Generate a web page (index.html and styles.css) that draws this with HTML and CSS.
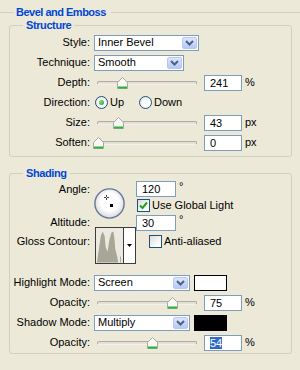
FILE: index.html
```html
<!DOCTYPE html>
<html>
<head>
<meta charset="utf-8">
<link rel="stylesheet" href="styles.css">
</head>
<body>
<div class="panel">
  <div class="title-row"><span class="rule short"></span><span class="title">Bevel and Emboss</span><span class="rule"></span></div>

  <fieldset class="group structure">
    <legend>Structure</legend>
    <div class="rows">
      <div class="row">
        <span class="lbl">Style:</span>
        <div class="select w-style"><span class="val">Inner Bevel</span><span class="drop"><svg width="9" height="6" viewBox="0 0 9 6"><path d="M1 1 L4.5 4.5 L8 1" fill="none" stroke="#4D6185" stroke-width="2"/></svg></span></div>
      </div>
      <div class="row">
        <span class="lbl">Technique:</span>
        <div class="select w-tech"><span class="val">Smooth</span><span class="drop"><svg width="9" height="6" viewBox="0 0 9 6"><path d="M1 1 L4.5 4.5 L8 1" fill="none" stroke="#4D6185" stroke-width="2"/></svg></span></div>
      </div>
      <div class="row">
        <span class="lbl">Depth:</span>
        <div class="slider"><span class="track"></span><span class="thumb" style="left:25px"><svg width="11" height="12" viewBox="0 0 11 12"><path d="M0.5 5.5 L5.5 0.5 L10.5 5.5 V11.5 H0.5 Z" fill="#F8F8F5" stroke="#A9A89F"/><path d="M1 10.5 H10" stroke="#2DB33A" stroke-width="2"/></svg></span></div>
        <span class="num">241</span><span class="unit">%</span>
      </div>
      <div class="row">
        <span class="lbl">Direction:</span>
        <span class="opt"><span class="radio on"></span><span class="optl">Up</span></span>
        <span class="opt"><span class="radio"></span><span class="optl">Down</span></span>
      </div>
      <div class="row">
        <span class="lbl">Size:</span>
        <div class="slider"><span class="track"></span><span class="thumb" style="left:21px"><svg width="11" height="12" viewBox="0 0 11 12"><path d="M0.5 5.5 L5.5 0.5 L10.5 5.5 V11.5 H0.5 Z" fill="#F8F8F5" stroke="#A9A89F"/><path d="M1 10.5 H10" stroke="#2DB33A" stroke-width="2"/></svg></span></div>
        <span class="num">43</span><span class="unit">px</span>
      </div>
      <div class="row">
        <span class="lbl">Soften:</span>
        <div class="slider"><span class="track"></span><span class="thumb" style="left:1px"><svg width="11" height="12" viewBox="0 0 11 12"><path d="M0.5 5.5 L5.5 0.5 L10.5 5.5 V11.5 H0.5 Z" fill="#F8F8F5" stroke="#A9A89F"/><path d="M1 10.5 H10" stroke="#2DB33A" stroke-width="2"/></svg></span></div>
        <span class="num">0</span><span class="unit">px</span>
      </div>
    </div>
  </fieldset>

  <fieldset class="group shading">
    <legend>Shading</legend>
    <div class="angle-grid">
      <span class="lbl g-angle">Angle:</span>
      <div class="dial"><svg width="31" height="31" viewBox="0 0 31 31">
        <defs><radialGradient id="dg" cx="50%" cy="45%" r="55%"><stop offset="0.55" stop-color="#FFFFFF"/><stop offset="1" stop-color="#D8D8DC"/></radialGradient></defs>
        <circle cx="15.5" cy="15.5" r="14.6" fill="url(#dg)" stroke="#68769A" stroke-width="1.4"/>
        <rect x="16" y="16" width="3" height="3" fill="#000"/>
        <g fill="#444"><rect x="12" y="7" width="1" height="1"/><rect x="12" y="8" width="1" height="1"/><rect x="12" y="10" width="1" height="1"/><rect x="12" y="11" width="1" height="1"/><rect x="10" y="9" width="1" height="1"/><rect x="11" y="9" width="1" height="1"/><rect x="13" y="9" width="1" height="1"/><rect x="14" y="9" width="1" height="1"/></g>
      </svg></div>
      <div class="g-angle-in"><span class="num wide">120</span><span class="deg">°</span></div>
      <div class="g-global"><span class="check on"><svg width="11" height="11" viewBox="0 0 11 11"><path d="M2 5.5 L4.5 8 L9 2.5" fill="none" stroke="#21A121" stroke-width="2"/></svg></span><span class="optl">Use Global Light</span></div>
      <span class="lbl g-alt">Altitude:</span>
      <div class="g-alt-in"><span class="num wide">30</span><span class="deg">°</span></div>
      <span class="lbl g-gloss">Gloss Contour:</span>
      <div class="contour">
        <div class="graph"><svg width="28" height="35" viewBox="0 0 28 35"><path d="M1 35 L3 21 L5 7 L7 3 L9 8 L10 19 L12 24 L14 11 L16 4 L18 3 L19 9 L20 21 L22 29 L23 35 Z M25 35 L25 29 L26 29 L26 35 Z" fill="#A8A697"/></svg></div>
        <div class="carrow"><svg width="5" height="3" viewBox="0 0 5 3"><path d="M0 0 H5 L2.5 3 Z" fill="#000"/></svg></div>
      </div>
      <div class="g-anti"><span class="check"></span><span class="optl">Anti-aliased</span></div>
    </div>
    <div class="rows modes">
      <div class="row">
        <span class="lbl">Highlight Mode:</span>
        <div class="select w-mode"><span class="val">Screen</span><span class="drop"><svg width="9" height="6" viewBox="0 0 9 6"><path d="M1 1 L4.5 4.5 L8 1" fill="none" stroke="#4D6185" stroke-width="2"/></svg></span></div>
        <span class="swatch white"></span>
      </div>
      <div class="row">
        <span class="lbl">Opacity:</span>
        <div class="slider"><span class="track"></span><span class="thumb" style="left:75px"><svg width="11" height="12" viewBox="0 0 11 12"><path d="M0.5 5.5 L5.5 0.5 L10.5 5.5 V11.5 H0.5 Z" fill="#F8F8F5" stroke="#A9A89F"/><path d="M1 10.5 H10" stroke="#2DB33A" stroke-width="2"/></svg></span></div>
        <span class="num">75</span><span class="unit">%</span>
      </div>
      <div class="row">
        <span class="lbl">Shadow Mode:</span>
        <div class="select w-mode"><span class="val">Multiply</span><span class="drop"><svg width="9" height="6" viewBox="0 0 9 6"><path d="M1 1 L4.5 4.5 L8 1" fill="none" stroke="#4D6185" stroke-width="2"/></svg></span></div>
        <span class="swatch black"></span>
      </div>
      <div class="row">
        <span class="lbl">Opacity:</span>
        <div class="slider"><span class="track"></span><span class="thumb" style="left:55px"><svg width="11" height="12" viewBox="0 0 11 12"><path d="M0.5 5.5 L5.5 0.5 L10.5 5.5 V11.5 H0.5 Z" fill="#F8F8F5" stroke="#A9A89F"/><path d="M1 10.5 H10" stroke="#2DB33A" stroke-width="2"/></svg></span></div>
        <span class="num"><span class="sel">54</span></span><span class="unit">%</span>
      </div>
    </div>
  </fieldset>
</div>
</body>
</html>
```

FILE: styles.css
```css
* { box-sizing: border-box; }
html, body { margin: 0; padding: 0; }
body {
  width: 300px;
  height: 370px;
  overflow: hidden;
  background: #ECE9D8;
  font-family: "Liberation Sans", Arial, sans-serif;
  font-size: 11px;
  color: #000;
}
.panel { padding: 6px 8px 0 9px; }

.title-row {
  display: flex;
  align-items: center;
  height: 13px;
  margin: 0 -8px 0 -9px;
}
.rule { flex: 1; height: 1px; background: #D0D0BF; }
.rule.short { flex: 0 0 14px; }
.title {
  font-weight: bold;
  color: #0046D5;
  line-height: 13px;
  letter-spacing: -0.5px;
  padding: 0 5px 0 2px;
}

.group {
  margin: 0;
  padding: 2px 0 5px 0;
  border: 1px solid #D0D0BF;
  border-radius: 3px;
  min-width: 0;
}
.group legend {
  margin-left: 13px;
  padding: 0 3px;
  font-weight: bold;
  color: #0046D5;
  line-height: 13px;
  letter-spacing: -0.4px;
}
.shading { margin-top: 10px; padding: 1px 0 2px 0; }

.rows { display: flex; flex-direction: column; gap: 3px; }
.modes { margin-top: 10px; }
.row { display: flex; align-items: center; height: 17px; }
.lbl {
  flex: none;
  width: 80px;
  margin-right: 4px;
  text-align: right;
  white-space: nowrap;
  line-height: 13px;
}

.select {
  flex: none;
  display: flex;
  align-items: center;
  height: 16px;
  border: 1px solid #7F9DB9;
  background: #fff;
  padding: 0 1px 0 3px;
}
.select .val { flex: 1; line-height: 13px; }
.w-style { width: 105px; }
.w-tech { width: 90px; }
.w-mode { width: 96px; }
.drop {
  flex: none;
  width: 15px;
  height: 12px;
  display: flex;
  align-items: center;
  justify-content: center;
  border: 1px solid #B7C9F3;
  border-radius: 2px;
  background: linear-gradient(#DCE6FE, #B6C9F6);
}
.drop svg { display: block; }

.slider { position: relative; flex: none; width: 107px; height: 17px; }
.track {
  position: absolute;
  left: 3px;
  width: 100px;
  top: 7px;
  height: 4px;
  border: 1px solid #ADACA3;
  border-bottom-color: #F2F1EB;
  border-radius: 2px;
  background: #E4E2D6;
}
.thumb {
  position: absolute;
  top: 3px;
  width: 11px;
  height: 12px;
  margin-left: -2px;
}
.thumb svg { display: block; }

.num {
  flex: none;
  display: block;
  width: 38px;
  height: 16px;
  margin-left: 3px;
  padding-left: 5px;
  border: 1px solid #7F9DB9;
  background: #fff;
  line-height: 14px;
}
.num.wide { width: 40px; margin-left: 0; }
.sel { background: #316AC5; color: #fff; }
.unit { margin-left: 3px; line-height: 13px; }
.deg { margin-left: 3px; line-height: 10px; align-self: flex-start; }

.opt { display: flex; align-items: center; width: 43px; margin-left: 1px; }
.optl { margin-left: 2px; line-height: 13px; white-space: nowrap; }
.radio {
  flex: none;
  width: 13px;
  height: 13px;
  border: 1px solid #1C5180;
  border-radius: 50%;
  background: radial-gradient(circle at 60% 60%, #FFFFFF 30%, #DCDCD4 100%);
  display: flex;
  align-items: center;
  justify-content: center;
}
.radio.on::after {
  content: "";
  width: 5px;
  height: 5px;
  border-radius: 50%;
  background: radial-gradient(circle at 35% 35%, #7BE07B, #21A121);
}
.check {
  flex: none;
  width: 13px;
  height: 13px;
  border: 1px solid #1C5180;
  background: linear-gradient(135deg, #DCDCD7, #FFFFFF 80%);
  display: flex;
  align-items: center;
  justify-content: center;
}
.check svg { display: block; }

.angle-grid {
  display: grid;
  grid-template-columns: 84px 42px 1fr;
  grid-template-rows: 16px 17px 13px 5px 32px;
}
.angle-grid .lbl { width: auto; margin-right: 0; padding-right: 4px; }
.g-angle { grid-column: 1; grid-row: 1; align-self: center; }
.dial { grid-column: 2; grid-row: 1 / 4; margin-top: 7px; }
.dial svg { display: block; }
.g-angle-in { grid-column: 3; grid-row: 1; display: flex; align-items: center; }
.g-global { grid-column: 3; grid-row: 2; display: flex; align-items: center; padding-left: 1px; }
.g-alt { grid-column: 1; grid-row: 3 / 5; align-self: center; margin-top: -2px; }
.g-alt-in { grid-column: 3; grid-row: 3 / 5; display: flex; align-items: center; }
.g-gloss { grid-column: 1; grid-row: 4 / 6; align-self: start; margin-top: 8px; }
.contour {
  grid-column: 2;
  grid-row: 4 / 6;
  margin-left: 1px;
  display: flex;
  border: 1px solid #3C3C3C;
  background: #fff;
}
.graph { width: 28px; background: #ECEAE0; border-right: 1px solid #3C3C3C; display: flex; align-items: flex-end; }
.graph svg { display: block; }
.carrow { flex: 1; display: flex; align-items: center; justify-content: center; }
.carrow svg { display: block; }
.g-anti { grid-column: 3; grid-row: 4 / 6; align-self: start; margin-top: 8px; margin-left: 13px; display: flex; align-items: center; }

.swatch { flex: none; width: 33px; height: 16px; margin-left: 4px; border: 1px solid #000; }
.swatch.white { background: #fff; }
.swatch.black { background: #000; }
```
